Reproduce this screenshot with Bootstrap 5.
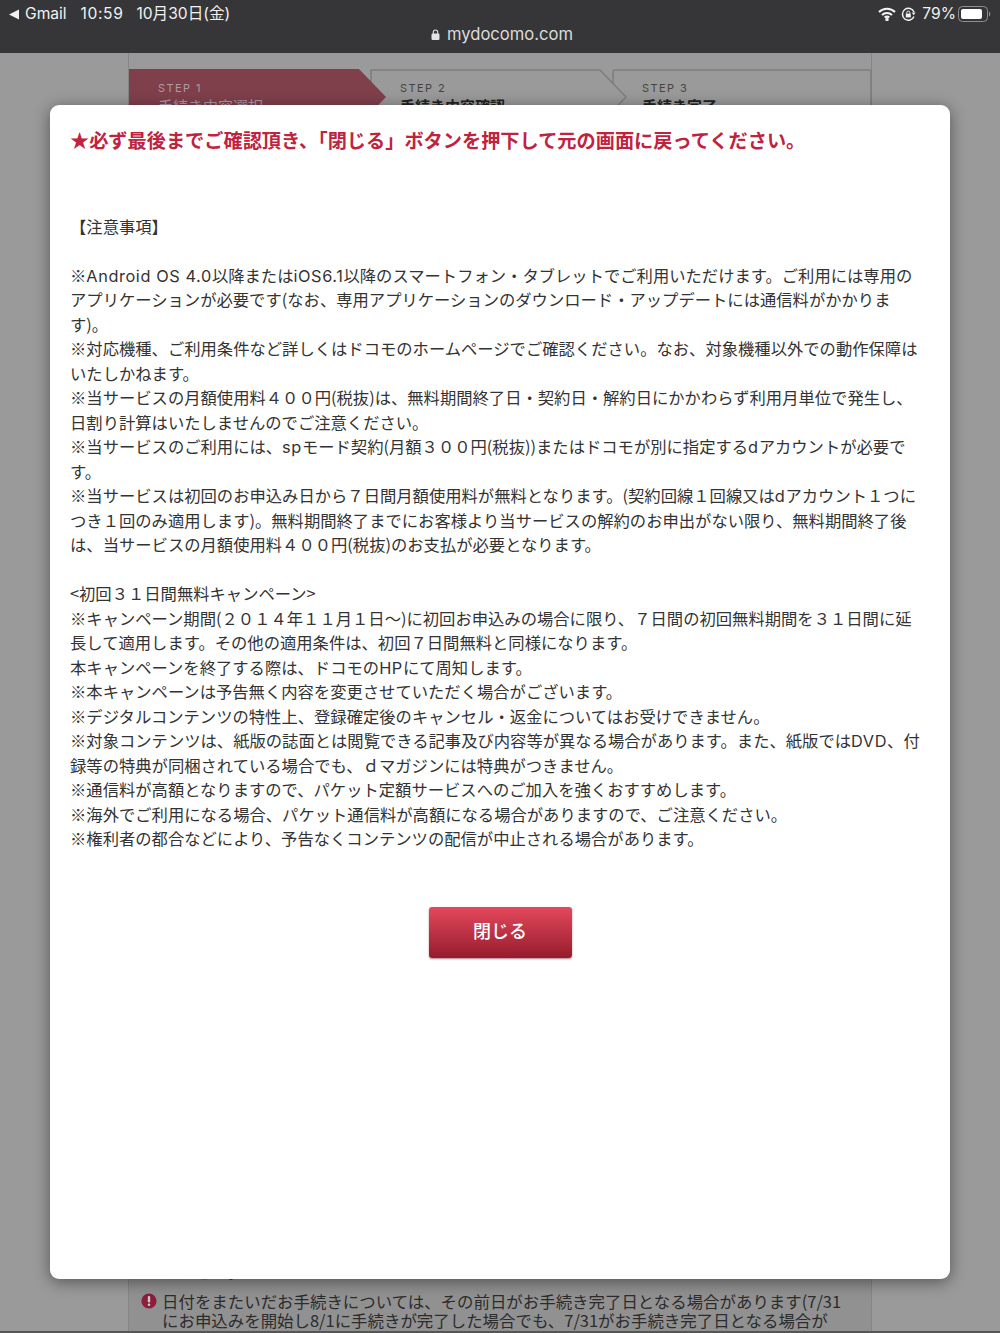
<!DOCTYPE html>
<html lang="ja">

<head>
    <meta charset="UTF-8">
    <meta name="viewport" content="width=device-width, initial-scale=1.0">
    <title>mydocomo.com</title>
    <link href="https://cdn.jsdelivr.net/npm/bootstrap@5.3.2/dist/css/bootstrap.min.css" rel="stylesheet">
    <style>
        html, body { height: 100%; }
        body {
            background: #9a9a9a;
            font-family: "Noto Sans CJK JP", "Liberation Sans", sans-serif;
            overflow: hidden;
        }
        .page-wrap { height: 1333px; width: 1000px; overflow: hidden; border-bottom: 2px solid #555; }

        /* browser chrome */
        .top-bar { height: 53px; background: #363638; color: #f1f1f1; padding: 4px 9px 0 9px; }
        .status-row { height: 20px; font-family: Inter, "Noto Sans CJK JP", sans-serif; font-size: 15.6px; line-height: 20px; }
        .status-gmail { margin-left: 5px; }
        .status-time { margin-left: 14px; letter-spacing: .6px; }
        .status-date { margin-left: 13px; }
        .status-rot { margin-left: 5px; }
        .status-pct { margin-left: 6px; }
        .status-batt { margin-left: 2px; }
        .url-row { height: 24px; margin-top: -2px; padding-left: 4px; font-family: Inter, sans-serif; font-size: 16.6px; line-height: 24px; color: #dcdcdc; gap: 7px; }

        /* dimmed page behind the dialog */
        .behind { width: 744px; margin-left: 128px; height: 1278px; padding-top: 16px; border-left: 1px solid #858585; border-right: 1px solid #858585; }
        .steps-row { height: 56px; }
        .step-box { position: relative; height: 56px; width: 257px; margin-right: -15px; padding: 14px 0 0 30px; color: #222; line-height: 1; flex-shrink: 0; }
        .step-box:nth-child(1) { z-index: 3; padding-left: 29px; margin-right: -16px; }
        .step-box:nth-child(2) { z-index: 2; }
        .step-box:last-child { width: 260px; margin-right: 0; }
        .step-box svg { position: absolute; left: 0; top: 0; }
        .step-label, .step-name { position: relative; }
        .step-label { font-family: Inter, sans-serif; font-size: 11px; letter-spacing: 1.4px; color: #444; display: block; height: 15px; }
        .step-name { font-size: 15px; font-weight: 700; display: block; }
        .step-on .step-label, .step-on .step-name { color: #ae9aa0; font-weight: 400; }
        .notes-area { margin-top: 1137px; height: 200px; background: #919191; color: #2c2c2c; font-size: 16.45px; line-height: 18.4px; padding-left: 33px; white-space: nowrap; position: relative; }
        .notes-first { margin-bottom: 12px; }
        .notes-icon { position: absolute; left: 12px; top: 31px; }

        /* dialog */
        .shade { position: absolute; inset: 0; z-index: 5; }
        .notice-box.modal-content {
            position: absolute; left: 50px; top: 105px; width: 900px; height: 1174px;
            border: 0; border-radius: 9px; background: #fff;
            box-shadow: 0 3px 16px rgba(0, 0, 0, .45);
            padding: 21px 20px 0 20px;
        }
        .notice-title { color: #bf2340; font-size: 19.2px; font-weight: 700; line-height: 28px; margin: 0 0 60px 0; white-space: nowrap; }
        .notice-text { color: #333; font-size: 16.32px; line-height: 24.48px; white-space: nowrap; margin: 0; }
        .latin-run { font-family: Inter, sans-serif; letter-spacing: .6px; line-height: 0; }
        .btn-close-red {
            width: 143px; height: 51px; padding: 0 0 3px 0; margin-top: 56px;
            color: #fff; font-size: 18px; font-weight: 500; border: 0; border-radius: 3px;
            background: linear-gradient(#e5485c, #951c2d);
            box-shadow: 0 1px 2px rgba(120, 30, 50, .55);
        }
    </style>
</head>

<body>
    <div class="page-wrap position-relative">
        <div class="top-bar">
            <div class="status-row d-flex align-items-center">
                <svg width="11" height="11" viewBox="0 0 11 11"><polygon points="0,5.5 10,0.5 10,10.5" fill="#f1f1f1" /></svg>
                <span class="status-gmail">Gmail</span>
                <span class="status-time">10:59</span>
                <span class="status-date">10月30日(金)</span>
                <span class="ms-auto d-flex align-items-center">
                    <svg width="18" height="14" viewBox="0 0 18 14" fill="none" stroke="#f4f4f4" stroke-width="2.1">
                        <path d="M1 5 A11.5 11.5 0 0 1 17 5" />
                        <path d="M4 8 A7.2 7.2 0 0 1 14 8" />
                        <path d="M6.7 10.6 A3.4 3.4 0 0 1 11.3 10.6" />
                        <circle cx="9" cy="12.6" r=".7" fill="#f4f4f4" />
                    </svg>
                    <svg class="status-rot" width="15" height="15" viewBox="0 0 15 15" fill="none" stroke="#f4f4f4" stroke-width="1.5">
                        <path d="M13 9.5 A6 6 0 1 1 13 5" />
                        <polygon points="10.8,5.6 14.6,5.6 12.7,8.2" fill="#f4f4f4" stroke="none" />
                        <rect x="4.8" y="6.6" width="5" height="3.8" fill="#f4f4f4" stroke="none" />
                        <path d="M5.8 6.6 V5.6 A1.5 1.5 0 0 1 8.8 5.6 V6.6" stroke-width="1" />
                    </svg>
                    <span class="status-pct">79%</span>
                    <svg class="status-batt" width="33" height="16" viewBox="0 0 33 16">
                        <rect x=".5" y=".5" width="29" height="15" rx="4" fill="none" stroke="#8f8f8f" />
                        <rect x="3" y="3" width="21" height="10" rx="2" fill="#fff" />
                        <path d="M31 5.5 A3 3 0 0 1 31 10.5 Z" fill="#8f8f8f" />
                    </svg>
                </span>
            </div>
            <div class="url-row d-flex justify-content-center align-items-center">
                <svg width="9" height="11" viewBox="0 0 9 11">
                    <rect x="0.5" y="4.5" width="8" height="6.5" rx="1.2" fill="#e4e4e4" />
                    <path d="M2.3 5 V3.2 A2.2 2.2 0 0 1 6.7 3.2 V5" fill="none" stroke="#e4e4e4" stroke-width="1.1" />
                </svg>
                <span>mydocomo.com</span>
            </div>
        </div>

        <div class="behind">
            <div class="steps-row d-flex">
                <div class="step-box step-on">
                    <svg width="257" height="56" viewBox="0 0 257 56"><polygon points="0,0 230,0 257,28 230,56 0,56" fill="#7f404c" /></svg>
                    <span class="step-label">STEP 1</span>
                    <span class="step-name">手続き内容選択</span>
                </div>
                <div class="step-box">
                    <svg width="257" height="56" viewBox="0 0 257 56"><polygon points="1,1 230,1 256,28 230,55 1,55" fill="#9a9a9a" stroke="#7e7e7e" stroke-width="1.5" /></svg>
                    <span class="step-label">STEP 2</span>
                    <span class="step-name">手続き内容確認</span>
                </div>
                <div class="step-box">
                    <svg width="260" height="56" viewBox="0 0 260 56"><path d="M1 55 V3 Q1 1 3 1 H257 Q259 1 259 3 V55 Z" fill="none" stroke="#7e7e7e" stroke-width="1.5" /></svg>
                    <span class="step-label">STEP 3</span>
                    <span class="step-name">手続き完了</span>
                </div>
            </div>
            <div class="notes-area">
                <svg class="notes-icon" width="16" height="16" viewBox="0 0 16 16">
                    <circle cx="8" cy="8" r="7.6" fill="#8c1f39" />
                    <rect x="6.8" y="3" width="2.4" height="6.5" rx="1" fill="#c9c9c9" />
                    <circle cx="8" cy="11.7" r="1.3" fill="#c9c9c9" />
                </svg>
                <div class="notes-first">ください。</div>
                <div>日付をまたいだお手続きについては、その前日がお手続き完了日となる場合があります(7/31</div>
                <div>にお申込みを開始し8/1に手続きが完了した場合でも、7/31がお手続き完了日となる場合が</div>
            </div>
        </div>

        <div class="shade">
            <div class="notice-box modal-content">
                <h1 class="notice-title">★必ず最後までご確認頂き、「閉じる」ボタンを押下して元の画面に戻ってください。</h1>
                <p class="notice-text">【注意事項】<br><br>※<span class="latin-run">Android OS 4.0</span>以降または<span class="latin-run">iOS6.1</span>以降のスマートフォン・タブレットでご利用いただけます。ご利用には専用の<br>アプリケーションが必要です(なお、専用アプリケーションのダウンロード・アップデートには通信料がかかりま<br>す)。<br>※対応機種、ご利用条件など詳しくはドコモのホームページでご確認ください。なお、対象機種以外での動作保障は<br>いたしかねます。<br>※当サービスの月額使用料４００円(税抜)は、無料期間終了日・契約日・解約日にかかわらず利用月単位で発生し、<br>日割り計算はいたしませんのでご注意ください。<br>※当サービスのご利用には、<span class="latin-run">sp</span>モード契約(月額３００円(税抜))またはドコモが別に指定する<span class="latin-run">d</span>アカウントが必要で<br>す。<br>※当サービスは初回のお申込み日から７日間月額使用料が無料となります。(契約回線１回線又は<span class="latin-run">d</span>アカウント１つに<br>つき１回のみ適用します)。無料期間終了までにお客様より当サービスの解約のお申出がない限り、無料期間終了後<br>は、当サービスの月額使用料４００円(税抜)のお支払が必要となります。<br><br>&lt;初回３１日間無料キャンペーン&gt;<br>※キャンペーン期間(２０１４年１１月１日～)に初回お申込みの場合に限り、７日間の初回無料期間を３１日間に延<br>長して適用します。その他の適用条件は、初回７日間無料と同様になります。<br>本キャンペーンを終了する際は、ドコモの<span class="latin-run">HP</span>にて周知します。<br>※本キャンペーンは予告無く内容を変更させていただく場合がございます。<br>※デジタルコンテンツの特性上、登録確定後のキャンセル・返金についてはお受けできません。<br>※対象コンテンツは、紙版の誌面とは閲覧できる記事及び内容等が異なる場合があります。また、紙版では<span class="latin-run">DVD</span>、付<br>録等の特典が同梱されている場合でも、ｄマガジンには特典がつきません。<br>※通信料が高額となりますので、パケット定額サービスへのご加入を強くおすすめします。<br>※海外でご利用になる場合、パケット通信料が高額になる場合がありますので、ご注意ください。<br>※権利者の都合などにより、予告なくコンテンツの配信が中止される場合があります。</p>
                <div class="text-center">
                    <button type="button" class="btn btn-close-red">閉じる</button>
                </div>
            </div>
        </div>
    </div>

    <script src="https://cdn.jsdelivr.net/npm/bootstrap@5.3.2/dist/js/bootstrap.bundle.min.js"></script>
</body>

</html>
